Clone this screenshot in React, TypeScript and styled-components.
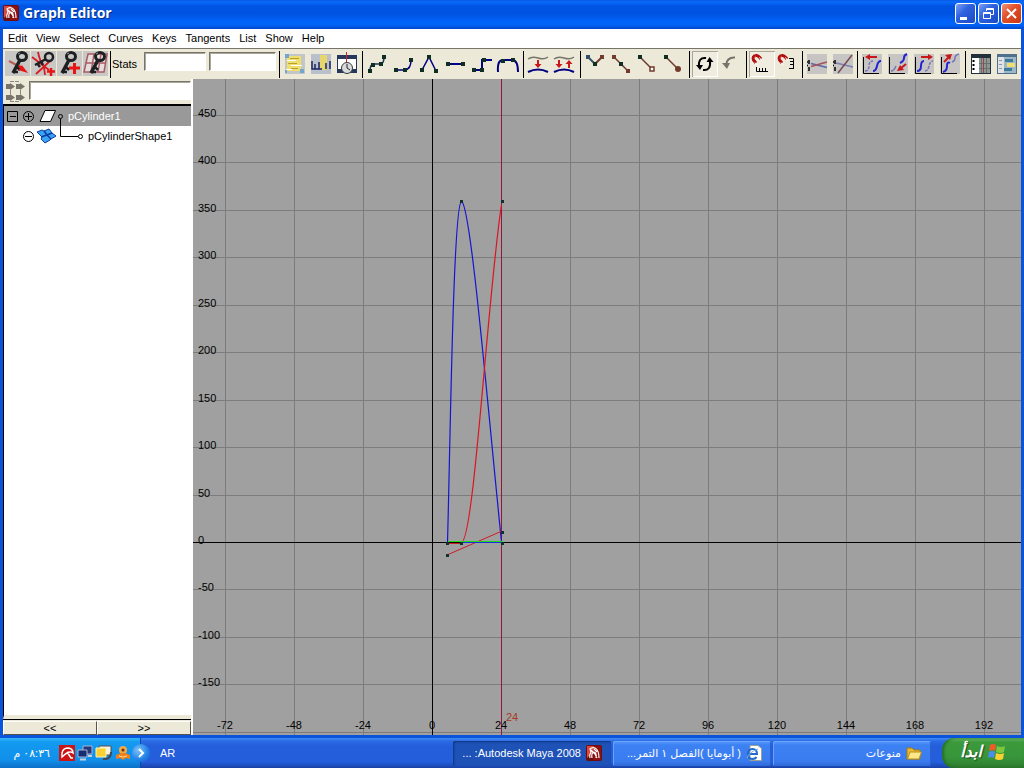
import React from "react";
import styled, { createGlobalStyle } from "styled-components";

const GlobalStyle = createGlobalStyle`
  * { box-sizing: border-box; }
  html, body, #root { height: 100%; margin: 0; }
  body {
    overflow: hidden;
    font: 11px/13px "Liberation Sans", "DejaVu Sans", sans-serif;
    color: #000;
  }
  button, input { font: inherit; color: inherit; }
  svg { display: block; flex: none; }
`;

const Screen = styled.div`
  display: flex;
  flex-direction: column;
  height: 100vh;
`;

const Window = styled.main`
  flex: 1;
  min-height: 0;
  display: flex;
  flex-direction: column;
  padding: 0 3px 3px;
  background: #0a54dc;
`;

const TitleBar = styled.header`
  display: flex;
  align-items: center;
  flex: none;
  height: 29px;
  margin: 0 -3px;
  padding: 0 2px 3px 3px;
  background: linear-gradient(#0a5be6 0, #0a6af8 2px, #0054e3 6px, #0053e1 14px, #0163fb 22px, #0262f6 25px, #0046cc 29px);
`;

const Title = styled.h1`
  flex: 1;
  margin: 0 0 0 4px;
  font: bold 14px/18px "Open Sans", sans-serif;
  color: #fff;
  text-shadow: 1px 1px #0a2f86;
`;

const Controls = styled.div`
  display: flex;
  gap: 2px;
`;

const ControlButton = styled.button<{ $close?: boolean }>`
  width: 21px;
  height: 21px;
  padding: 0;
  border: 1px solid #fff;
  border-radius: 3px;
  background: ${(p) =>
    p.$close
      ? "linear-gradient(135deg, #f0957a, #e2512b 40%, #c8380f)"
      : "linear-gradient(135deg, #7da2f5, #2f62e0 40%, #1a49c4)"};
`;

const MenuBar = styled.nav`
  display: flex;
  flex: none;
  gap: 8px;
  height: 20px;
  padding: 0 4px;
  background: #fff;
  border-bottom: 1px solid #77746a;
`;

const MenuItem = styled.button`
  padding: 0 0 0 1px;
  border: 0;
  background: none;
  line-height: 19px;
`;

const Toolbar = styled.div`
  display: flex;
  align-items: center;
  flex: none;
  height: 30px;
  padding-left: 2px;
  background: #ece9d8;
  overflow: hidden;
`;

const Separator = styled.span<{ $tight?: boolean }>`
  flex: none;
  width: 1px;
  height: 27px;
  margin: 0 ${(p) => (p.$tight ? 1 : 2)}px;
  background: #000;
`;

const ToolButton = styled.button<{ $pressed?: boolean }>`
  flex: none;
  width: 26px;
  height: 26px;
  padding: 0;
  border: 0;
  background: ${(p) => (p.$pressed ? "#f0ede0" : "none")};
  box-shadow: ${(p) => (p.$pressed ? "inset 1px 1px #aca899, inset -1px -1px #fff" : "none")};
`;

const StatsLabel = styled.label`
  flex: none;
  width: 32px;
`;

const Field = styled.input<{ $width?: number }>`
  flex: ${(p) => (p.$width ? "none" : "1")};
  width: ${(p) => (p.$width ? p.$width + "px" : "100%")};
  min-width: 0;
  height: 19px;
  padding: 0 3px;
  border: 1px solid;
  border-color: #77746a #fff #fff #77746a;
  box-shadow: inset 1px 1px #aca899;
  border-radius: 0;
  background: #fff;
  outline: none;
`;

const StatFields = styled.div`
  display: flex;
  gap: 3px;
  padding: 0 1px 5px 0;
`;

const Body = styled.div`
  flex: 1;
  min-height: 0;
  display: flex;
`;

const Sidebar = styled.aside`
  flex: none;
  width: 190px;
  display: flex;
  flex-direction: column;
  background: #ece9d8;
  border-right: 2px solid #fff;
`;

const SearchRow = styled.div`
  display: flex;
  gap: 4px;
  height: 25px;
  padding: 2px 0 0 2px;
`;

const Tree = styled.ul`
  flex: 1;
  min-height: 0;
  margin: 0;
  padding: 0;
  list-style: none;
  background: #fff;
  border: 1px solid #000;
  border-width: 2px 0 0 1px;
  border-bottom: 4px solid #ece9d8;
`;

const TreeRow = styled.li<{ $selected?: boolean; $child?: boolean }>`
  display: flex;
  align-items: center;
  height: 20px;
  padding-left: ${(p) => (p.$child ? 18 : 0)}px;
  background: ${(p) => (p.$selected ? "#999" : "#fff")};
  color: ${(p) => (p.$selected ? "#fff" : "#000")};
`;

const Toggle = styled.button<{ $width: number }>`
  width: ${(p) => p.$width}px;
  height: 20px;
  padding: 0;
  border: 0;
  background: none;
`;

const Pager = styled.div`
  display: flex;
  flex: none;
  height: 16px;
  padding-top: 1px;
  border-top: 1px solid #000;
`;

const PagerButton = styled.button`
  flex: 1;
  padding: 0;
  border: 1px solid;
  border-color: #fff #55534a #55534a #fff;
  background: #ece9d8;
  line-height: 12px;
`;

const Graph = styled.svg`
  flex: 1;
  min-width: 0;
  height: 100%;
  background: #a0a0a0;
`;

const Taskbar = styled.footer`
  flex: none;
  display: flex;
  align-items: center;
  height: 30px;
  background: linear-gradient(#3f8cf3 0, #2b6be6 3px, #245edb 8px, #245edb 24px, #1941a5 30px);
  color: #fff;
`;

const StartButton = styled.button`
  display: flex;
  align-items: center;
  justify-content: center;
  gap: 6px;
  width: 82px;
  height: 30px;
  padding: 0 0 3px;
  border: 0;
  border-radius: 12px 0 0 12px;
  background: linear-gradient(#6cb86a 0, #3c9a3c 4px, #37943a 20px, #2b7a2c 30px);
  box-shadow: inset 2px 0 3px #256b27;
  font: italic bold 16px/20px "DejaVu Sans", sans-serif;
  text-shadow: 1px 1px 1px #1d4a1d;
`;

const Tasks = styled.div`
  flex: 1;
  display: flex;
  gap: 2px;
  padding-right: 11px;
`;

const TaskButton = styled.button<{ $active?: boolean }>`
  display: flex;
  align-items: center;
  gap: 5px;
  width: 158px;
  height: 25px;
  padding: 0 9px;
  border: 0;
  border-radius: 2px;
  background: ${(p) =>
    p.$active ? "#1e52b7" : "linear-gradient(#5c9bfb, #3c81f3 4px, #3a7cf0 20px, #2f69d8)"};
  box-shadow: ${(p) => (p.$active ? "inset 1px 1px 2px #12357d" : "inset 1px 1px #67a2fb, inset -1px 0 #2a60cf")};
  line-height: 20px;
  white-space: nowrap;
`;

const Language = styled.span`
  padding-left: 19px;
  font-size: 11px;
`;

const Tray = styled.div`
  position: relative;
  display: flex;
  align-items: center;
  gap: 2px;
  width: 141px;
  height: 30px;
  padding-right: 9px;
  background: linear-gradient(#35b6f6 0, #139af0 4px, #118fea 22px, #0d6fc8 30px);
  border-right: 1px solid #0b4aa8;
`;

const Clock = styled.time`
  margin-right: 7px;
  white-space: nowrap;
`;

const TrayToggle = styled.button`
  position: absolute;
  right: -10px;
  top: 6px;
  width: 18px;
  height: 18px;
  padding: 0;
  border: 0;
  border-radius: 50%;
  background: radial-gradient(circle at 35% 35%, #7cc4fa, #1f7fe6 60%, #1a62cd);
`;

const NAVY = "#000080";
const DARK = "#0e2e22";
const BROWN = "#703a2c";
const RED = "#c8181c";

const Dot = ({ x, y, fill = DARK }: { x: number; y: number; fill?: string }) => (
  <rect x={x - 2} y={y - 2} width="4" height="4" fill={fill} />
);

const KeyShape = ({ shift = 0 }: { shift?: number }) => (
  <g fill="none" stroke="#1c2022" transform={`translate(${shift} 0)`}>
    <ellipse cx="16" cy="5.500" rx="4.500" ry="4" strokeWidth="3" />
    <path d="M14 9L7 22" strokeWidth="3.500" />
    <path d="M10 15l4 4M7 21h5" strokeWidth="2.500" />
    <path d="M12 3l2-1" stroke="#8d9a9c" />
  </g>
);

const Plate = ({ color = "#c6c5c3" }: { color?: string }) => <rect x="3" y="3" width="20" height="20" fill={color} />;
const KeyPlate = () => <rect width="25" height="25" fill="#c9c8c4" />;

const Magnet = () => (
  <g fill="none">
    <path d="M7 12L4.500 9Q3 5 7 4.500Q9 4 12 8" stroke="#b01010" strokeWidth="3" />
    <path d="M6 11.500l2 3M10.500 6.500l2 3" stroke="#fff" strokeWidth="1" />
    <path d="M5 8Q5 5.500 7 5" stroke="#f04040" />
  </g>
);

const Axis = () => <path d="M4.500 6V22.500H20" fill="none" stroke="#000" />;

const BufferTicks = () => <path d="M5 9v4M3 14.500h1M5 16v4M3 11h1" stroke="#000" strokeWidth="1.500" />;

const icons: Record<string, React.ReactNode> = {
  moveKey: (
    <>
      <KeyPlate />
      <path d="M4 10l13 7" stroke="#b86058" strokeWidth="2" />
      <KeyShape shift={1} />
      <path d="M13 14l4 1-1-2 7 9-10-3 2-1z" fill="#e81414" />
    </>
  ),
  insertKey: (
    <>
      <KeyPlate />
      <path d="M7 1q2 10 6 15l1 8M19 10L5 23M1 6l17 13" fill="none" stroke="#d81c24" strokeWidth="1.800" />
      <circle cx="18" cy="6" r="4" fill="none" stroke="#1c2022" strokeWidth="2.500" />
      <path d="M15 8L4 14M6 12l3 4M10 10l2 4" stroke="#1c2022" strokeWidth="2.500" />
      <path d="M16 20.500h8M20 17v8" stroke="#e81414" strokeWidth="2.500" />
    </>
  ),
  addKey: (
    <>
      <KeyPlate />
      <KeyShape shift={-2} />
      <path d="M12 17h11M17.500 12v11" stroke="#e81414" strokeWidth="3" />
    </>
  ),
  lattice: (
    <>
      <KeyPlate />
      <path d="M5 3h19l-3 18H1zM3 12h20M11 3L8 21M18 3l-3 18" fill="#e4dedd" stroke="#a85a66" strokeWidth="1.500" />
      <KeyShape shift={1} />
    </>
  ),
  frameAll: (
    <>
      <Plate color="#c3c6c8" />
      <path d="M5 5h14v15H5z" fill="#f0df6c" />
      <path d="M5 9.500h9M9 14.500h11M4 18.500h6" stroke="#fff" />
      <path d="M8 7.500h9M6 12.500h9M9 17.500h7" stroke="#b5a030" />
      <path d="M3 3h4v4H3zM18 18h4v4h-4zM3 19h2v3H3z" fill="#74a5cf" />
    </>
  ),
  framePlayback: (
    <>
      <Plate color="#b9bfcb" />
      <path d="M12 4h7v15h-7z" fill="#e6d66c" />
      <path d="M4 10v8h3v-5v5h4v-7v7h3M18 18v-6M22 10v8" fill="none" stroke="#1a2560" strokeWidth="1.500" />
    </>
  ),
  centerTime: (
    <>
      <path d="M3 4h20v18H3z" fill="#26385c" />
      <path d="M4 8h18v10H4z" fill="#fff" />
      <path d="M12.500 1v12" stroke="#d81c24" />
      <circle cx="13" cy="17" r="5.500" fill="#d8dadb" stroke="#3a3a3a" />
      <path d="M13 13v4l3 2" fill="none" stroke="#222" />
    </>
  ),
  spline: (
    <>
      <path d="M5 20Q5 14 8 13H16Q19 12 19 6" fill="none" stroke="#203050" strokeWidth="1.500" />
      <Dot x={5} y={20} /><Dot x={8} y={14} /><Dot x={16} y={13} /><Dot x={19} y={6} />
    </>
  ),
  clamped: (
    <>
      <path d="M5 19H14Q20 18 20 9" fill="none" stroke={NAVY} strokeWidth="1.500" />
      <Dot x={5} y={19} /><Dot x={14} y={19} /><Dot x={20} y={9} />
    </>
  ),
  linear: (
    <>
      <path d="M5 19L12 6L19 20" fill="none" stroke={NAVY} strokeWidth="1.500" />
      <Dot x={5} y={19} /><Dot x={12} y={6} /><Dot x={19} y={20} />
    </>
  ),
  flat: (
    <>
      <path d="M4 13H20" stroke={NAVY} strokeWidth="2" />
      <Dot x={5} y={13} /><Dot x={20} y={13} />
    </>
  ),
  step: (
    <>
      <path d="M5 19H13V9H23" fill="none" stroke={NAVY} strokeWidth="2" />
      <Dot x={5} y={19} /><Dot x={13} y={19} /><Dot x={15} y={9} />
    </>
  ),
  plateau: (
    <>
      <path d="M3 21Q2 9 8 9H17Q23 9 23 21" fill="none" stroke={NAVY} strokeWidth="2" />
      <Dot x={8} y={10} /><Dot x={18} y={9} />
    </>
  ),
  bufferSnap: (
    <>
      <path d="M2 8Q6 5 12 7T22 6" fill="none" stroke="#77746c" strokeWidth="1.500" />
      <path d="M2 21Q12 16 22 21" fill="none" stroke={NAVY} strokeWidth="2" />
      <path d="M12 9v6" stroke={RED} strokeWidth="2" /><path d="M8.500 13h7L12 17z" fill={RED} />
    </>
  ),
  bufferSwap: (
    <>
      <path d="M2 8Q6 5 12 7T22 6" fill="none" stroke="#77746c" strokeWidth="1.500" />
      <path d="M2 21Q12 16 22 21" fill="none" stroke={NAVY} strokeWidth="2" />
      <path d="M7 9v6M17 11v6" stroke={RED} strokeWidth="2" />
      <path d="M3.500 13h7L7 17zM13.500 13h7L17 9z" fill={RED} />
    </>
  ),
  breakTangent: (
    <>
      <path d="M5 6l7 7" stroke="#35506a" strokeWidth="2" /><path d="M12 13l7-7" stroke={BROWN} strokeWidth="2" />
      <Dot x={5} y={6} fill="#35506a" /><Dot x={12} y={13} /><Dot x={19} y={6} fill={BROWN} />
    </>
  ),
  unifyTangent: (
    <>
      <path d="M5 6l14 14" stroke={BROWN} strokeWidth="1.500" />
      <Dot x={5} y={6} fill={BROWN} /><Dot x={12} y={13} /><Dot x={19} y={20} fill={BROWN} />
    </>
  ),
  freeWeight: (
    <>
      <path d="M5 6l11 11" stroke={BROWN} strokeWidth="1.500" />
      <Dot x={5} y={6} /><path d="M15 16h4v4h-4z" fill="#fff" stroke={BROWN} strokeWidth="1.500" />
    </>
  ),
  lockWeight: (
    <>
      <path d="M5 6l12 12" stroke={BROWN} strokeWidth="1.500" />
      <Dot x={5} y={6} /><circle cx="17" cy="18" r="3" fill={BROWN} />
    </>
  ),
  autoLoad: (
    <>
      <path d="M14 7Q6 6 7 16M11 19Q19 20 18 10" fill="none" stroke="#000" strokeWidth="2" />
      <path d="M4 14h7l-3 5zM14.500 11h7l-4-5z" fill="#000" />
    </>
  ),
  loadOnce: (
    <>
      <path d="M17 6.500Q9 6 8 14" fill="none" stroke="#77746c" strokeWidth="2" />
      <path d="M4 12h8l-3 6z" fill="#77746c" />
    </>
  ),
  timeSnap: (
    <>
      <Magnet />
      <path d="M7.500 16v4.500H19M10.500 17v3M13.500 17v3M16.500 17v3" fill="none" stroke="#000" />
    </>
  ),
  valueSnap: (
    <>
      <Magnet />
      <path d="M14 7.500h4.500V18M15 10.500h3M15 13.500h3M14 17.500h5" fill="none" stroke="#000" />
    </>
  ),
  absolute: (
    <>
      <Plate />
      <BufferTicks />
      <path d="M7 12.500l16 4" stroke="#5c68a8" strokeWidth="1.500" /><path d="M7 15.500L23 11" stroke="#a8505c" strokeWidth="1.500" />
    </>
  ),
  stacked: (
    <>
      <Plate />
      <BufferTicks />
      <path d="M6 12l17 4" stroke="#7a80b0" strokeWidth="1.500" /><path d="M8 22L22 4" stroke="#784850" strokeWidth="1.500" />
    </>
  ),
  preCycle: (
    <>
      <Plate />
      <Axis />
      <path d="M6 20Q10 20 10 15T14 10" fill="none" stroke="#7676b8" strokeWidth="1.500" strokeDasharray="3 1" />
      <path d="M14 20Q17 20 18 15T22 10" fill="none" stroke="#2424d0" strokeWidth="2" />
      <path d="M9 6h9" stroke={RED} strokeWidth="2" /><path d="M6 6l5-3v6z" fill={RED} />
    </>
  ),
  preOffset: (
    <>
      <Plate />
      <Axis />
      <path d="M6 20q3 0 5-5" fill="none" stroke="#7676b8" strokeWidth="1.500" />
      <path d="M15 12Q19 10 19 7T22 3" fill="none" stroke="#2424d0" strokeWidth="2" />
      <path d="M21 13l-6 5" stroke={RED} strokeWidth="2" /><path d="M12 20l7-1-4-5z" fill={RED} />
    </>
  ),
  postCycle: (
    <>
      <Plate />
      <Axis />
      <path d="M6 20Q10 20 10 15T13 10" fill="none" stroke="#2424d0" strokeWidth="2" />
      <path d="M14 20Q17 20 18 15T22 10" fill="none" stroke="#7676b8" strokeWidth="1.500" strokeDasharray="3 1" />
      <path d="M10 6h8" stroke={RED} strokeWidth="2" /><path d="M22 6l-5-3v6z" fill={RED} />
    </>
  ),
  postOffset: (
    <>
      <Plate />
      <Axis />
      <path d="M6 21Q10 20 10 15T13 12" fill="none" stroke="#2424d0" strokeWidth="2" />
      <path d="M15 11Q18 10 18 7T22 3" fill="none" stroke="#7676b8" strokeWidth="1.500" />
      <path d="M7 11l5-5" stroke={RED} strokeWidth="2" /><path d="M15 3l-7 1 5 5z" fill={RED} />
    </>
  ),
  dopeSheet: (
    <>
      <path d="M3 3h20v20H3z" fill="#22303c" />
      <path d="M4 7h7v15H4z" fill="#fff" /><path d="M11 7h11v15H11z" fill="#8f9592" />
      <path d="M5.500 9v2M5.500 13v2M5.500 17v2" stroke="#000" strokeWidth="2" />
      <path d="M13.500 7v15M18.500 7v15M11 12.500h11M11 17.500h11" stroke="#68706c" />
      <path d="M15.500 7v15" stroke="#a04048" />
    </>
  ),
  traxEditor: (
    <>
      <path d="M3 3h20v20H3z" fill="#4f6f8c" />
      <path d="M4 6h6v16H4z" fill="#dfe3e5" /><path d="M10 6h12v16H10z" fill="#9ab8c8" />
      <path d="M5 9.500h3M5 13.500h3M5 17.500h3" stroke="#8898a8" />
      <path d="M11 8h8v3h-8zM10 17h8v3h-8z" fill="#3f7898" /><path d="M13 12h8v4h-8z" fill="#f0de70" />
    </>
  ),
};

const Tool = ({ name, label, pressed }: { name: string; label: string; pressed?: boolean }) => (
  <ToolButton type="button" title={label} aria-label={label} $pressed={pressed}>
    <svg width="26" height="26" viewBox="0 0 26 26">{icons[name]}</svg>
  </ToolButton>
);

type ToolDef = [string, string, boolean?];

const keyTools: ToolDef[] = [
  ["moveKey", "Move nearest picked key"],
  ["insertKey", "Insert keys"],
  ["addKey", "Add keys"],
  ["lattice", "Lattice deform keys"],
];

const toolGroups: { tools: ToolDef[]; tight?: boolean }[] = [
  { tools: [["frameAll", "Frame all"], ["framePlayback", "Frame playback range"], ["centerTime", "Center current time"]] },
  {
    tools: [
      ["spline", "Spline tangents"], ["clamped", "Clamped tangents"], ["linear", "Linear tangents"],
      ["flat", "Flat tangents"], ["step", "Step tangents"], ["plateau", "Plateau tangents"],
    ],
  },
  { tools: [["bufferSnap", "Buffer curve snapshot"], ["bufferSwap", "Swap buffer curves"]] },
  {
    tools: [
      ["breakTangent", "Break tangents"], ["unifyTangent", "Unify tangents"],
      ["freeWeight", "Free tangent weight"], ["lockWeight", "Lock tangent weight"],
    ],
  },
  { tools: [["autoLoad", "Auto load", true], ["loadOnce", "Load selected"]] },
  { tools: [["timeSnap", "Time snap", true], ["valueSnap", "Value snap"]] },
  { tools: [["absolute", "Absolute view"], ["stacked", "Normalized view"]], tight: true },
  {
    tools: [
      ["preCycle", "Pre-infinity cycle"], ["preOffset", "Pre-infinity cycle with offset"],
      ["postCycle", "Post-infinity cycle"], ["postOffset", "Post-infinity cycle with offset"],
    ],
    tight: true,
  },
  { tools: [["dopeSheet", "Open Dope Sheet"], ["traxEditor", "Open Trax Editor"]] },
];

const menus = ["Edit", "View", "Select", "Curves", "Keys", "Tangents", "List", "Show", "Help"];

const MayaLogo = () => (
  <svg width="16" height="16" viewBox="0 0 16 16">
    <rect width="16" height="16" rx="2" fill="#6c0c0c" />
    <path d="M1 1h13L1 13z" fill="#d8483c" />
    <path d="M8 1h7v14H7z" fill="#8c1010" />
    <path d="M4 13Q3 10 5 7L4 4Q6 2 9 3Q13 5 13 13M6 13Q5 8 8 7Q11 8 10 13M5 5l4 4 2 4M8 4l3 3" fill="none" stroke="#fff" strokeWidth="1.200" />
  </svg>
);

/* Graph coordinates: frames along x, curve value up y. */
const px = (frame: number) => Math.round(239 + frame * 2.877);
const py = (value: number) => Math.round(463 - value * 0.949);
const frameTicks = [-72, -48, -24, 0, 24, 48, 72, 96, 120, 144, 168, 192];
const valueTicks = [450, 400, 350, 300, 250, 200, 150, 100, 50, 0, -50, -100, -150, -200];
const keys = [[10, 360], [24.4, 360], [5.2, 0], [10, 0], [24.4, 0], [5.2, -13], [24.4, 12]];

const CurveGraph = () => (
  <Graph role="img" aria-label="Animation curves">
    <g stroke="#7c7c7c" shapeRendering="crispEdges">
      {frameTicks.filter((f) => f !== 24).map((f) => (
        <line key={f} x1={px(f) + 0.5} x2={px(f) + 0.5} y1="0" y2="100%" />
      ))}
      {valueTicks.map((v) => <line key={v} x1="0" x2="100%" y1={py(v) + 0.5} y2={py(v) + 0.5} />)}
      <line x1={px(0) + 0.5} x2={px(0) + 0.5} y1="0" y2="100%" stroke="#000" />
      <line x1="0" x2="100%" y1={py(0) + 0.5} y2={py(0) + 0.5} stroke="#000" />
    </g>
    <rect x={px(24)} y="0" width="1" height="100%" fill="#98143c" />
    <g fill="none">
      <path d="M254.500 463C257 380 260 126 268.500 122C278 128 294 321 308.500 463" stroke="#1414d4" strokeWidth="1.200" />
      <path d="M268.500 463C281 463 295 211 308.500 126" stroke="#dc1420" strokeWidth="1.200" />
      <path d="M254 476L309 452M254 464.500H268" stroke="#cc1c28" />
    </g>
    <rect x="255" y="462" width="55" height="1" fill="#20d818" />
    <rect x="270" y="463" width="39" height="1" fill="#1830e0" />
    {keys.map(([f, v]) => <rect key={f + "," + v} x={px(f) - 1} y={py(v)} width="3" height="3" fill="#10302c" />)}
    {valueTicks.slice(0, -1).map((v) => <text key={v} x="5" y={py(v) + 2}>{v}</text>)}
    {frameTicks.map((f) => <text key={f} x={px(f)} y="650" textAnchor="middle">{f}</text>)}
    <text x="313" y="642" fill="#a83820">24</text>
  </Graph>
);

const CircleSign = ({ plus }: { plus?: boolean }) => (
  <svg width="14" height="20" viewBox="0 0 14 20" fill="none" stroke="#000">
    <circle cx="6.500" cy="10.500" r="5" />
    <path d={plus ? "M3 10.500h7M6.500 7v7" : "M3 10.500h7"} />
  </svg>
);

export default function App() {
  return (
    <Screen>
      <GlobalStyle />
      <Window>
        <TitleBar>
          <MayaLogo />
          <Title>Graph Editor</Title>
          <Controls>
            <ControlButton type="button" aria-label="Minimize">
              <svg width="19" height="19"><path d="M4 13h7v3H4z" fill="#fff" /></svg>
            </ControlButton>
            <ControlButton type="button" aria-label="Restore">
              <svg width="19" height="19" fill="none" stroke="#fff">
                <path d="M7.500 7V4.500h7v6H12M7 5.500h8M4.500 8.500h7v6h-7zM4 9.500h8" />
              </svg>
            </ControlButton>
            <ControlButton type="button" aria-label="Close" $close>
              <svg width="19" height="19"><path d="M5 5l9 9M14 5l-9 9" stroke="#fff" strokeWidth="2" /></svg>
            </ControlButton>
          </Controls>
        </TitleBar>
        <MenuBar>
          {menus.map((m) => <MenuItem type="button" key={m}>{m}</MenuItem>)}
        </MenuBar>
        <Toolbar role="toolbar">
          {keyTools.map(([name, label]) => <Tool key={name} name={name} label={label} />)}
          <Separator $tight />
          <StatsLabel htmlFor="stat-time">Stats</StatsLabel>
          <StatFields>
            <Field id="stat-time" $width={62} />
            <Field aria-label="Stat value" $width={67} />
          </StatFields>
          {toolGroups.map((group) => (
            <React.Fragment key={group.tools[0][0]}>
              <Separator $tight={group.tight} />
              {group.tools.map(([name, label, pressed]) => <Tool key={name} name={name} label={label} pressed={pressed} />)}
            </React.Fragment>
          ))}
        </Toolbar>
        <Body>
          <Sidebar>
            <SearchRow>
              <svg width="20" height="21" viewBox="0 0 20 21">
                <g fill="#77746c">
                  <path d="M1 3h4V2l5 3.500L5 9V8H1zM11 3h4V2l5 3.500L15 9V8h-4zM1 14h4v-1l5 3.500L5 20v-1H1zM11 14h4v-1l5 3.500-5 3.500v-1h-4z" />
                </g>
                <path d="M5 .5h10M5 20.500h10M5.500 9v4M15.500 9v4" stroke="#8a877c" strokeDasharray="4 1" />
              </svg>
              <Field aria-label="Filter outliner" />
            </SearchRow>
            <Tree>
              <TreeRow $selected>
                <Toggle type="button" $width={18} aria-label="Collapse pCylinder1">
                  <svg width="18" height="20" fill="none" stroke="#000"><path d="M3.500 5.500h10v10h-10zM6 10.500h6" /></svg>
                </Toggle>
                <Toggle type="button" $width={14} aria-label="Expand channels">
                  <CircleSign plus />
                </Toggle>
                <svg width="22" height="20"><path d="M9 4.500h10.500l-5 11H4z" fill="#fff" stroke="#000" /></svg>
                <svg width="10" height="20" fill="none" stroke="#000">
                  <circle cx="2.500" cy="10.500" r="2" /><path d="M2.500 13v7" />
                </svg>
                pCylinder1
              </TreeRow>
              <TreeRow $child>
                <Toggle type="button" $width={14} aria-label="Collapse channels">
                  <CircleSign />
                </Toggle>
                <svg width="22" height="20">
                  <path d="M1 6l5-2 2 1 5-2 3 4 4 3-5 3-1 1-5 3-4-4 1-2z" fill="#3aa4f4" stroke="#0c3ca0" />
                  <path d="M8 5l3 4 4 4M5 11l6-2 5-2" fill="none" stroke="#0c3ca0" strokeWidth="1.500" />
                </svg>
                <svg width="30" height="20" fill="none" stroke="#000">
                  <path d="M2.500 0v10.500H20" /><circle cx="22.500" cy="10.500" r="2" />
                </svg>
                pCylinderShape1
              </TreeRow>
            </Tree>
            <Pager>
              <PagerButton type="button" aria-label="Previous">&lt;&lt;</PagerButton>
              <PagerButton type="button" aria-label="Next">&gt;&gt;</PagerButton>
            </Pager>
          </Sidebar>
          <CurveGraph />
        </Body>
      </Window>
      <Taskbar dir="rtl" lang="ar">
        <StartButton type="button">
          <svg width="18" height="18" viewBox="0 0 18 18">
            <path d="M2 2q3-2 6 0L7 8Q4 6 1 8z" fill="#f05a28" />
            <path d="M9 3q4 2 8 0l-1 6q-4 2-8 0z" fill="#7cc83c" />
            <path d="M1 9q3-2 6 0l-1 6q-3-2-6 0z" fill="#4a8cf0" />
            <path d="M8 10q4 2 8 0l-1 6q-4 2-8 0z" fill="#fcd030" />
          </svg>
          ابدأ
        </StartButton>
        <Tasks>
          <TaskButton type="button">
            <svg width="16" height="16" viewBox="0 0 16 16">
              <path d="M1 3h5l2 2h6v9H1z" fill="#e8b830" stroke="#a87c10" />
              <path d="M1.500 14L4 7h11.500L13 14z" fill="#fce888" stroke="#b88c20" />
            </svg>
            منوعات
          </TaskButton>
          <TaskButton type="button">
            <svg width="16" height="16" viewBox="0 0 16 16">
              <path d="M4 .5h8l3.500 3v12H4z" fill="#fff" stroke="#a0a090" />
              <path d="M2 9h9Q11 4 6.500 4T2 9t4.500 5q3 0 4-2" fill="none" stroke="#2468c8" strokeWidth="2" />
              <path d="M1 13Q3 7 12 4" fill="none" stroke="#78b4f0" />
            </svg>
            ( أبومايا )الفصل ١ التمر...
          </TaskButton>
          <TaskButton type="button" $active>
            <MayaLogo />
            Autodesk Maya 2008: ...
          </TaskButton>
        </Tasks>
        <Language>AR</Language>
        <Tray>
          <TrayToggle type="button" aria-label="Show hidden icons">
            <svg width="18" height="18"><path d="M7 5l4 4-4 4" fill="none" stroke="#fff" strokeWidth="2" /></svg>
          </TrayToggle>
          <svg width="16" height="16" viewBox="0 0 16 16">
            <circle cx="8" cy="5" r="4" fill="#f8a840" />
            <path d="M6 8L1 10v4l4-1 3 2 3-2 4 1v-4l-5-2z" fill="#f08018" />
            <circle cx="8" cy="5" r="1.500" fill="#683010" /><path d="M4 11l4 1 4-1" fill="none" stroke="#fce0a0" />
          </svg>
          <svg width="18" height="16" viewBox="0 0 18 16">
            <path d="M4 1h12v9H4z" fill="#f4f4e4" stroke="#505050" /><path d="M1 3h10v9H1z" fill="#fcd030" stroke="#f8f0c0" />
            <path d="M16 7q0 8-8 7" fill="none" stroke="#404850" strokeWidth="2" />
          </svg>
          <svg width="16" height="16" viewBox="0 0 16 16">
            <path d="M6 1h9v8H6z" fill="#24387c" stroke="#a8b4d0" /><path d="M1 5h9v7H1z" fill="#182c70" stroke="#a8b4d0" />
            <path d="M11 11h4M3 14.500h6" stroke="#c8d0e0" strokeWidth="2" />
          </svg>
          <svg width="16" height="16" viewBox="0 0 16 16">
            <rect width="16" height="16" fill="#cc1414" />
            <path d="M3 12Q2 4 8 3q6 0 6 5Q10 5 3 12zM8 7l4 6h2" fill="none" stroke="#fff" strokeWidth="1.500" />
          </svg>
          <Clock>٠٨:٣٦ م</Clock>
        </Tray>
      </Taskbar>
    </Screen>
  );
}
